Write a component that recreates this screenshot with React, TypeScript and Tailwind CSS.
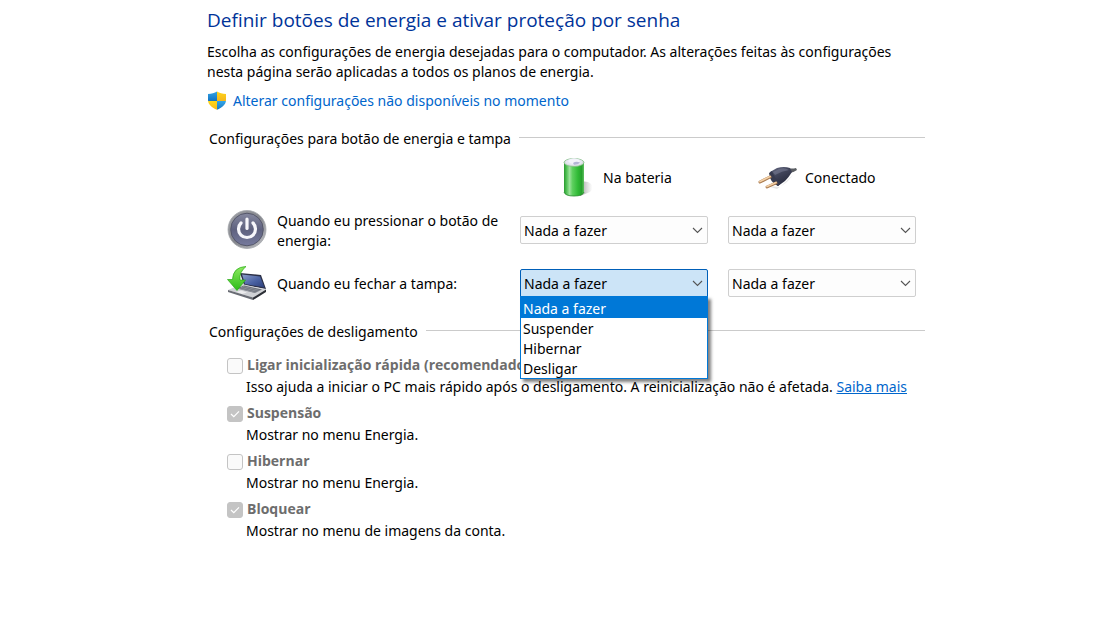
import React from "react";

function ShieldIcon() {
  return (
    <svg width="20" height="20" viewBox="0 0 20 20" aria-hidden="true" className="shrink-0">
      <defs>
        <clipPath id="shield">
          <path d="M10 0.500 C7.500 2 4.500 2.800 1 2.900 V9 C1 13.500 5 16.800 10 18.700 C15 16.800 19 13.500 19 9 V2.900 C15.500 2.800 12.500 2 10 0.500Z" />
        </clipPath>
        <linearGradient id="shieldBlue" x1="0" y1="0" x2="0" y2="1">
          <stop offset="0" stopColor="#35a6e6" />
          <stop offset="1" stopColor="#1173c4" />
        </linearGradient>
        <linearGradient id="shieldGold" x1="0" y1="0" x2="0" y2="1">
          <stop offset="0" stopColor="#ffd81a" />
          <stop offset="1" stopColor="#f5b51c" />
        </linearGradient>
      </defs>
      <g clipPath="url(#shield)">
        <rect width="10" height="10" fill="url(#shieldBlue)" />
        <rect x="10" width="10" height="10" fill="url(#shieldGold)" />
        <rect y="10" width="10" height="10" fill="url(#shieldGold)" />
        <rect x="10" y="10" width="10" height="10" fill="url(#shieldBlue)" />
      </g>
    </svg>
  );
}

function BatteryIcon() {
  return (
    <svg width="32" height="40" viewBox="1 1 32 40" aria-hidden="true" className="shrink-0">
      <defs>
        <linearGradient id="cell" x1="0" y1="0" x2="1" y2="0">
          <stop offset="0" stopColor="#2a9a30" />
          <stop offset=".12" stopColor="#4fbf53" />
          <stop offset=".28" stopColor="#9be39a" />
          <stop offset=".42" stopColor="#5fd060" />
          <stop offset=".7" stopColor="#2fba35" />
          <stop offset=".88" stopColor="#27a02d" />
          <stop offset="1" stopColor="#5fc060" />
        </linearGradient>
        <linearGradient id="cellShadow" x1="0" y1="0" x2="1" y2="0">
          <stop offset="0" stopColor="#777" stopOpacity=".75" />
          <stop offset="1" stopColor="#aaa" stopOpacity="0" />
        </linearGradient>
      </defs>
      <path d="M19 24 L26 25 Q34 29 28 35 L18 39Z" fill="url(#cellShadow)" />
      <path d="M2 5 V35 Q3 39 12 39 Q21 39 22 35 V5Z" fill="url(#cell)" />
      <ellipse cx="12" cy="5.500" rx="10" ry="4" fill="#d3dcd8" stroke="#7dbb82" strokeWidth=".7" />
      <ellipse cx="12" cy="5" rx="8.500" ry="3.200" fill="#e6e6f2" />
      <path d="M6 4 Q8 1.200 12 1.200 Q16 1.200 18 4 Q16 7 12 7 Q8 7 6 4Z" fill="#f3f3fb" />
      <path d="M11 6 Q14 4 18 5.500 Q16 8 12 7.800Z" fill="#b4b5d6" />
      <path d="M2 35 Q3 39 12 39 Q21 39 22 35" fill="none" stroke="#1f8a26" strokeWidth=".8" />
    </svg>
  );
}

function PlugIcon() {
  return (
    <svg width="40" height="26" viewBox="0 0 40 26" aria-hidden="true" className="shrink-0">
      <defs>
        <linearGradient id="plug" x1="0" y1="0" x2=".6" y2="1">
          <stop offset="0" stopColor="#6b7088" />
          <stop offset=".4" stopColor="#43475d" />
          <stop offset="1" stopColor="#25283a" />
        </linearGradient>
      </defs>
      <path d="M10 21 L23 22 L36 10 L30 17 L20 24Z" fill="#777" opacity=".18" />
      <path d="M30 3 Q35 4 39 3 L40 5 Q36 8 32 8Z" fill="#5a5d62" />
      <path d="M13 7 L20 3 Q27 1 33 3 L35 7 Q32 12 28 16 L21 21 Q14 16 13 7Z" fill="url(#plug)" />
      <path d="M16 7 L22 4 Q28 2 32 5 Q25 6 18 10Z" fill="#7f849c" opacity=".5" />
      <path d="M12 8 L15 6 Q17 13 24 18 L21 21 Q13 18 12 8Z" fill="#373b50" />
      <path d="M3 17 L13 12" stroke="#a8794e" strokeWidth="3" strokeLinecap="round" />
      <path d="M3 16.500 L13 11.500" stroke="#f3d0a6" strokeWidth="1.700" strokeLinecap="round" />
      <path d="M10 22 L19 18" stroke="#a8794e" strokeWidth="3" strokeLinecap="round" />
      <path d="M10 21.500 L19 17.500" stroke="#f3d0a6" strokeWidth="1.700" strokeLinecap="round" />
    </svg>
  );
}

function PowerIcon() {
  return (
    <svg width="40" height="40" viewBox="0 0 40 40" aria-hidden="true" className="shrink-0">
      <defs>
        <linearGradient id="ring" x1="0" y1="0" x2="1" y2="1">
          <stop offset="0" stopColor="#a1a3a8" />
          <stop offset=".5" stopColor="#85878d" />
          <stop offset="1" stopColor="#c3c4c8" />
        </linearGradient>
        <linearGradient id="face" x1="0" y1="0" x2="0" y2="1">
          <stop offset="0" stopColor="#85889f" />
          <stop offset=".5" stopColor="#5f627f" />
          <stop offset="1" stopColor="#767a9d" />
        </linearGradient>
      </defs>
      <circle cx="20" cy="19.500" r="19" fill="url(#ring)" stroke="#a5a7ac" strokeWidth=".8" />
      <circle cx="20" cy="19.500" r="16.300" fill="url(#face)" stroke="#55576a" strokeWidth="1" />
      <path d="M14 13 A8.500 8.500 0 1 0 26 13" fill="none" stroke="#f7f7fb" strokeWidth="3.200" strokeLinecap="round" />
      <path d="M20 9 V18.500" stroke="#f7f7fb" strokeWidth="3.200" strokeLinecap="round" />
    </svg>
  );
}

function LidIcon() {
  return (
    <svg width="40" height="36" viewBox="0 0 40 36" aria-hidden="true" className="shrink-0">
      <defs>
        <linearGradient id="screen" x1="0" y1="0" x2="1" y2="1">
          <stop offset="0" stopColor="#8a9cc9" />
          <stop offset=".55" stopColor="#4a62a3" />
          <stop offset="1" stopColor="#2b3d78" />
        </linearGradient>
        <linearGradient id="arrow" x1="0" y1="0" x2="0" y2="1">
          <stop offset="0" stopColor="#8cea60" />
          <stop offset="1" stopColor="#2dbb18" />
        </linearGradient>
      </defs>
      <path d="M13 8 L34 10 L39 24 L17 20Z" fill="#2c3047" />
      <path d="M15 9.500 L33 11.500 L37.500 22.500 L18 19Z" fill="url(#screen)" />
      <path d="M1 25 L15 19 L39 24.500 L26 32.500Z" fill="#cfd1d5" />
      <path d="M10 23.500 L17 20.500 L35 24.500 L28 28Z" fill="#666b75" />
      <path d="M12 23.500 L29 27.500 M14 22.500 L31 26.500 M16 21.500 L33 25.500" stroke="#a2a6ae" strokeWidth=".6" />
      <path d="M9 27 L14 25.500 L20 27.500 L15 29Z" fill="#ececee" />
      <path d="M1 25 L26 32.500 L26 35 L1 27Z" fill="#6a6d75" />
      <path d="M26 32.500 L39 24.500 V27 L26 35Z" fill="#2c2f36" />
      <path d="M19 1.500 Q6 2 5.500 14.500 L0.500 14.500 L10 25.500 L18.500 15 L13 15 Q12 7 19 1.500Z" fill="url(#arrow)" stroke="#28a915" strokeWidth=".7" />
    </svg>
  );
}

function ActionSelect({ label, open = false }: { label: string; open?: boolean }) {
  return (
    <div className="relative">
      <div className="grid items-center">
        <select
          aria-label={label}
          defaultValue="Nada a fazer"
          className={
            open
              ? "col-start-1 row-start-1 h-7 w-full appearance-none rounded-t-xs border border-[#005fb8] bg-[#cce4f7] px-[3px] pt-0.5 text-sm text-black outline-none"
              : "col-start-1 row-start-1 h-7 w-full appearance-none rounded-xs border border-[#cfcfcf] bg-[#fdfdfd] px-[3px] pt-0.5 text-sm text-black outline-none"
          }
        >
          {actions.map((a) => (
            <option key={a}>{a}</option>
          ))}
        </select>
        <svg
          width="11"
          height="7"
          viewBox="0 0 11 7"
          aria-hidden="true"
          className="pointer-events-none col-start-1 row-start-1 mr-[5px] justify-self-end"
        >
          <path d="M1 1 L5.500 5.500 L10 1" fill="none" stroke="#555" strokeWidth="1.100" />
        </svg>
      </div>
      {open && (
        <ul
          role="listbox"
          aria-label={label}
          className="absolute inset-x-0 top-full z-10 -mt-px border border-[#0078d7] bg-white text-sm shadow-[3px_3px_3px_rgba(0,0,0,0.5)]"
        >
          {actions.map((a, i) => (
            <li
              key={a}
              role="option"
              aria-selected={i === 0}
              className={
                i === 0
                  ? "h-[21px] bg-[#0078d7] px-0.5 leading-6 text-white"
                  : "h-5 px-0.5 leading-[22px] text-black"
              }
            >
              {a}
            </li>
          ))}
        </ul>
      )}
    </div>
  );
}

const actions = ["Nada a fazer", "Suspender", "Hibernar", "Desligar"];

const shutdownOptions = [
  {
    id: "fast",
    title: "Ligar inicialização rápida (recomendado)",
    text: "Isso ajuda a iniciar o PC mais rápido após o desligamento. A reinicialização não é afetada.",
    checked: false,
    more: true,
  },
  { id: "sleep", title: "Suspensão", text: "Mostrar no menu Energia.", checked: true },
  { id: "hibernate", title: "Hibernar", text: "Mostrar no menu Energia.", checked: false },
  { id: "lock", title: "Bloquear", text: "Mostrar no menu de imagens da conta.", checked: true },
];

function SectionTitle({ children }: { children: React.ReactNode }) {
  return (
    <div className="flex gap-2 pl-0.5">
      <h2 className="shrink-0 leading-5">{children}</h2>
      <span className="mt-2 h-px flex-1 bg-[#cbcbcb]" />
    </div>
  );
}

export default function App() {
  return (
    <main className="min-h-screen bg-white pt-2 pl-[207px] font-['Noto_Sans','Open_Sans',sans-serif] text-sm leading-5 text-black">
      <div className="max-w-[718px]">
        <h1 className="font-['Open_Sans','Noto_Sans',sans-serif] text-[19px] leading-6 text-[#003399]">
          Definir botões de energia e ativar proteção por senha
        </h1>
        <p className="mt-2.5 max-w-[710px]">
          Escolha as configurações de energia desejadas para o computador. As alterações feitas às configurações nesta
          página serão aplicadas a todos os planos de energia.
        </p>
        <a href="#alterar" className="mt-[9px] flex items-center gap-1.5 text-[#0066cc]">
          <ShieldIcon />
          Alterar configurações não disponíveis no momento
        </a>

        <section className="mt-[18px]">
          <SectionTitle>Configurações para botão de energia e tampa</SectionTitle>
          <div className="mt-[9px] grid grid-cols-[293px_188px_188px] items-center gap-x-5">
            <div />
            <div className="flex items-center gap-2 pl-[43px]">
              <BatteryIcon />
              Na bateria
            </div>
            <div className="flex items-center gap-2 pl-[29px]">
              <PlugIcon />
              Conectado
            </div>

            <div className="mt-[11px] flex items-center gap-2.5 pl-5">
              <PowerIcon />
              <span className="pt-0.5">Quando eu pressionar o botão de energia:</span>
            </div>
            <div className="mt-[11px]">
              <ActionSelect label="Botão de energia, na bateria" />
            </div>
            <div className="mt-[11px]">
              <ActionSelect label="Botão de energia, conectado" />
            </div>

            <div className="mt-[14px] flex items-center gap-2.5 pl-5">
              <LidIcon />
              <span className="pt-0.5">Quando eu fechar a tampa:</span>
            </div>
            <div className="mt-[14px]">
              <ActionSelect label="Fechar a tampa, na bateria" open />
            </div>
            <div className="mt-[14px]">
              <ActionSelect label="Fechar a tampa, conectado" />
            </div>
          </div>
        </section>

        <section className="mt-[21px]">
          <SectionTitle>Configurações de desligamento</SectionTitle>
          <div className="mt-3 flex flex-col gap-1 pl-5">
            {shutdownOptions.map((o) => (
              <div key={o.id} className="leading-[22px]">
                <div className="flex items-center gap-1">
                  <span className="grid shrink-0 place-items-center pt-0.5">
                    <input
                      id={o.id}
                      type="checkbox"
                      disabled
                      defaultChecked={o.checked}
                      className="col-start-1 row-start-1 size-4 appearance-none rounded-[3px] border border-[#c4c4c4] bg-[#fafafa] checked:bg-[#c4c4c4]"
                    />
                    {o.checked && (
                      <svg
                        width="10"
                        height="8"
                        viewBox="0 0 10 8"
                        aria-hidden="true"
                        className="pointer-events-none col-start-1 row-start-1"
                      >
                        <path d="M1 4 L3.800 6.700 L9 1.300" fill="none" stroke="#fff" strokeWidth="1.200" />
                      </svg>
                    )}
                  </span>
                  <label htmlFor={o.id} className="font-['Open_Sans','Noto_Sans',sans-serif] font-bold text-[#6d6d6d]">
                    {o.title}
                  </label>
                </div>
                <p className="pl-[19px] whitespace-nowrap">
                  {o.text}
                  {o.more && (
                    <>
                      {" "}
                      <a href="#saiba-mais" className="text-[#0066cc] underline">
                        Saiba mais
                      </a>
                    </>
                  )}
                </p>
              </div>
            ))}
          </div>
        </section>
      </div>
    </main>
  );
}
